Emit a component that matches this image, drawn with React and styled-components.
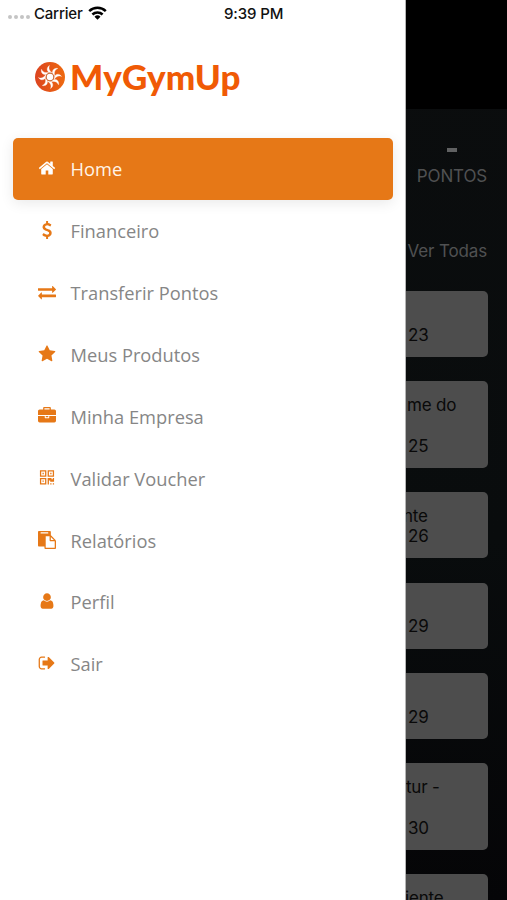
import React from "react";
import styled, { createGlobalStyle } from "styled-components";

const GlobalStyle = createGlobalStyle`
  * {
    box-sizing: border-box;
  }

  body {
    margin: 0;
    background: #000;
  }
`;

const Screen = styled.div`
  display: flex;
  width: 507px;
  height: 900px;
  overflow: hidden;
  font-family: Inter, "Liberation Sans", sans-serif;
`;

const Drawer = styled.aside`
  flex: none;
  width: 406px;
  background: #fff;
  border-right: 1px solid #b5b5b5;
`;

const StatusBar = styled.div`
  display: flex;
  align-items: center;
  height: 26px;
  padding-left: 8px;
  color: #111;
  font-size: 15px;
  font-weight: 500;
  white-space: nowrap;
`;

const Signal = styled.div`
  display: flex;
  gap: 2px;
  margin: 8px 4px 0 0;
`;

const Dot = styled.span`
  width: 4px;
  height: 4px;
  border-radius: 50%;
  background: #c4c4c4;
`;

const Carrier = styled.span`
  width: 49px;
  letter-spacing: -0.2px;
`;

const WifiIcon = styled.svg`
  width: 19px;
  height: 14px;
  margin-left: 5px;
`;

const Clock = styled.span`
  margin-left: 117px;
  letter-spacing: -0.1px;
`;

const Brand = styled.div`
  display: flex;
  align-items: center;
  height: 102px;
  padding-left: 35px;
`;

const BrandMark = styled.svg`
  width: 30px;
  height: 30px;
  margin-right: 5px;
`;

const BrandName = styled.span`
  margin-top: -3px;
  color: #f05a05;
  font-family: Lato, sans-serif;
  font-size: 35px;
  font-weight: 900;
  line-height: 40px;
  letter-spacing: 0.2px;
`;

const Menu = styled.nav`
  display: flex;
  flex-direction: column;
  padding: 10px 12px 0 13px;
`;

const MenuItem = styled.a`
  display: flex;
  align-items: center;
  height: 61.87px;
  padding-left: 25px;
  border-radius: 5px;
  color: ${({ $active }) => ($active ? "#fff4e8" : "#868686")};
  background: ${({ $active }) => ($active ? "#e67817" : "transparent")};
  box-shadow: ${({ $active }) =>
    $active ? "0 3px 14px rgba(0, 0, 0, 0.09)" : "none"};
  font-family: "Open Sans", sans-serif;
  font-size: 18.3px;

  svg {
    width: 18px;
    height: 18px;
    margin: 0 14.5px 1px 0;
    fill: ${({ $active }) => ($active ? "#fff" : "#e67817")};
  }
`;

const Backdrop = styled.main`
  flex: 1;
  min-width: 0;
  overflow: hidden;
  background: linear-gradient(#0b0d0e, #090c0d 60%, #050507);
`;

const Notch = styled.div`
  height: 109px;
  background: #000;
`;

const Summary = styled.section`
  display: flex;
  flex-direction: column;
  align-items: flex-end;
  height: 182px;
  padding: 39px 20px 0 0;
  color: #505152;
  font-size: 17px;
  line-height: 20px;
  letter-spacing: -0.15px;
  white-space: nowrap;
`;

const Points = styled.div`
  display: flex;
  flex-direction: column;
  align-items: center;
`;

const Dash = styled.span`
  width: 10px;
  height: 4px;
  margin-bottom: 14px;
  background: #606162;
`;

const SeeAll = styled.a`
  margin-top: 55px;
`;

const Cards = styled.section`
  display: flex;
  flex-direction: column;
  gap: 24.4px;
`;

const Card = styled.article`
  flex: none;
  width: 82px;
  height: ${({ $tall }) => ($tall ? "86.4px" : "66px")};
  padding-top: 13.4px;
  overflow: hidden;
  border-radius: 0 5px 5px 0;
  background: #4d4d4d;
  color: #090909;
  font-size: 17px;
  line-height: 20.4px;
  letter-spacing: -0.2px;
  white-space: nowrap;
`;

const Line = styled.div`
  height: 20.4px;
  margin-left: ${({ $left }) => $left}px;
`;

const items = [
  {
    label: "Home",
    d: "M1472 992v480q0 26-19 45t-45 19h-384v-384h-256v384h-384q-26 0-45-19t-19-45v-480q0-1 .5-3t.5-3l575-474 575 474q1 2 1 6zm223-69l-62 74q-8 9-21 11h-3q-13 0-21-7l-692-577-692 577q-12 8-24 7-13-2-21-11l-62-74q-8-10-7-23.5t11-21.5l719-599q32-26 76-26t76 26l244 204v-195q0-14 9-23t23-9h192q14 0 23 9t9 23v408l219 182q10 8 11 21.5t-7 23.5z",
  },
  {
    label: "Financeiro",
    d: "M1362 1185q0 153-99.5 263.5t-258.5 136.5v175q0 14-9 23t-23 9h-135q-13 0-22.5-9.5t-9.5-22.5v-175q-66-9-127.5-31t-101.5-44.5-74-48-46.5-37.5-17.5-18q-17-21-2-41l103-135q7-10 23-12 15-2 24 9l2 2q113 99 243 125 37 8 74 8 81 0 142.5-43t61.5-122q0-28-15-53t-33.5-42-58.5-37.5-66-32-80-32.5q-39-16-61.5-25t-61.5-26.5-62.5-31-56.5-35.5-53.5-42.5-43.5-49-35.5-58-21-66.5-8.5-78q0-138 98-242t255-134v-180q0-13 9.5-22.5t22.5-9.5h135q14 0 23 9t9 23v176q57 6 110.5 23t87 33.5 63.5 37.5 39 29 15 14q17 18 5 38l-81 146q-8 15-23 16-14 3-27-7-3-3-14.5-12t-39-26.5-58.5-32-74.5-26-85.5-11.5q-95 0-155 43t-60 111q0 26 8.5 48t29.5 41.5 39.5 33 56 31 60.5 27 70 27.5q53 20 81 31.5t76 35 75.5 42.5 62 50 53 63.5 31.5 76.5 13 94z",
  },
  {
    label: "Transferir Pontos",
    d: "M1792 1184v192q0 13-9.5 22.5t-22.5 9.5h-1376v192q0 13-9.5 22.5t-22.5 9.5q-12 0-24-10l-319-320q-9-9-9-22 0-14 9-23l320-320q9-9 23-9 13 0 22.5 9.5t9.5 22.5v192h1376q13 0 22.5 9.5t9.5 22.5zm0-544q0 14-9 23l-320 320q-9 9-23 9-13 0-22.5-9.5t-9.5-22.5v-192h-1376q-13 0-22.5-9.5t-9.5-22.5v-192q0-13 9.5-22.5t22.5-9.5h1376v-192q0-14 9-23t23-9q12 0 24 10l319 319q9 9 9 23z",
  },
  {
    label: "Meus Produtos",
    d: "M1728 647q0 22-26 48l-363 354 86 500q1 7 1 20 0 21-10.5 35.5t-30.5 14.5q-19 0-40-12l-449-236-449 236q-22 12-40 12-21 0-31.5-14.5t-10.5-35.5q0-6 2-20l86-500-364-354q-25-27-25-48 0-37 56-46l502-73 225-455q19-41 49-41t49 41l225 455 502 73q56 9 56 46z",
  },
  {
    label: "Minha Empresa",
    d: "M640 256h512v-128h-512v128zm1152 640v480q0 66-47 113t-113 47h-1472q-66 0-113-47t-47-113v-480h672v160q0 26 19 45t45 19h320q26 0 45-19t19-45v-160h672zm-768 0v128h-256v-128h256zm768-480v384h-1792v-384q0-66 47-113t113-47h352v-160q0-40 28-68t68-28h576q40 0 68 28t28 68v160h352q66 0 113 47t47 113z",
  },
  {
    label: "Validar Voucher",
    d: "M576 1152v128h-128v-128h128zm0-768v128h-128v-128h128zm768 0v128h-128v-128h128zm-1024 1023h384v-383h-384v383zm0-767h384v-384h-384v384zm768 0h384v-384h-384v384zm-256 256v640h-640v-640h640zm512 512v128h-128v-128h128zm256 0v128h-128v-128h128zm0-512v384h-384v-128h-128v384h-128v-640h384v128h128v-128h128zm-768-768v640h-640v-640h640zm768 0v640h-640v-640h640z",
  },
  {
    label: "Relatórios",
    d: "M768 1664h896v-640h-416q-40 0-68-28t-28-68v-416h-384v1152zm256-1440v-64q0-13-9.5-22.5t-22.5-9.5h-704q-13 0-22.5 9.5t-9.5 22.5v64q0 13 9.5 22.5t22.5 9.5h704q13 0 22.5-9.5t9.5-22.5zm256 672h299l-299-299v299zm512 128v672q0 40-28 68t-68 28h-960q-40 0-68-28t-28-68v-160h-544q-40 0-68-28t-28-68v-1344q0-40 28-68t68-28h1088q40 0 68 28t28 68v328q21 13 36 28l408 408q28 28 48 76t20 88z",
  },
  {
    label: "Perfil",
    d: "M1536 1399q0 109-62.5 187t-150.5 78h-854q-88 0-150.5-78t-62.5-187q0-85 8.5-160.5t31.5-152 58.5-131 94-89 134.5-34.5q131 128 313 128t313-128q76 0 134.5 34.5t94 89 58.5 131 31.5 152 8.5 160.5zm-256-887q0 159-112.5 271.5t-271.5 112.5-271.5-112.5-112.5-271.5 112.5-271.5 271.5-112.5 271.5 112.5 112.5 271.5z",
  },
  {
    label: "Sair",
    d: "M704 1440q0 4 1 20t.5 26.5-3 23.5-10 19.5-20.5 6.5h-320q-119 0-203.5-84.5t-84.5-203.5v-704q0-119 84.5-203.5t203.5-84.5h320q13 0 22.5 9.5t9.5 22.5q0 4 1 20t.5 26.5-3 23.5-10 19.5-20.5 6.5h-320q-66 0-113 47t-47 113v704q0 66 47 113t113 47h312l11.5 1 11.5 3 8 5.5 7 9 2 13.5zm928-544q0 26-19 45l-544 544q-19 19-45 19t-45-19-19-45v-288h-448q-26 0-45-19t-19-45v-384q0-26 19-45t45-19h448v-288q0-26 19-45t45-19 45 19l544 544q19 19 19 45z",
  },
];

// left is where the visible end of each line starts, next to the drawer
const cards = [
  { lines: [["", 0], ["23", 2]] },
  { tall: true, lines: [["me do", 1], ["", 0], ["25", 2]] },
  { lines: [["nte", -3], ["26", 2]] },
  { lines: [["", 0], ["29", 2]] },
  { lines: [["", 0], ["29", 2]] },
  { tall: true, lines: [["tur -", 0], ["", 0], ["30", 2]] },
  { tall: true, lines: [["iente", -1]] },
];

const blades = [0, 45, 90, 135, 180, 225, 270, 315];

const App = () => {
  return (
    <>
      <GlobalStyle />
      <Screen>
        <Drawer>
          <StatusBar>
            <Signal>
              <Dot />
              <Dot />
              <Dot />
              <Dot />
            </Signal>
            <Carrier>Carrier</Carrier>
            <WifiIcon viewBox="0 0 19 14">
              <g fill="none" stroke="#000" strokeWidth="2.5">
                <path d="M1.2 5.2a12 12 0 0 1 16.6 0" />
                <path d="M4.4 8.5a7.4 7.4 0 0 1 10.2 0" />
              </g>
              <path d="M9.5 13.8l-3-3a4.3 4.3 0 0 1 6 0z" />
            </WifiIcon>
            <Clock>9:39 PM</Clock>
          </StatusBar>

          <Brand>
            <BrandMark viewBox="0 0 30 30">
              <defs>
                <linearGradient id="mark" x1="0" x2="1">
                  <stop offset="0" stopColor="#dc4420" />
                  <stop offset="1" stopColor="#ee6a10" />
                </linearGradient>
              </defs>
              <circle cx="15" cy="15" r="15" fill="url(#mark)" />
              {blades.map((angle) => (
                <path
                  key={angle}
                  d="M16.5 11.5C12 10.5 10.5 6 14.5 3.4C13.2 6.6 14.5 9 17.5 10.8Z"
                  fill="#fff"
                  stroke="#fff"
                  strokeWidth="0.3"
                  strokeLinejoin="round"
                  transform={`rotate(${angle} 15 15)`}
                />
              ))}
              <circle
                cx="15"
                cy="15"
                r="3.8"
                fill="#fff"
                stroke="#c9703f"
                strokeWidth="1.2"
              />
            </BrandMark>
            <BrandName>MyGymUp</BrandName>
          </Brand>

          <Menu>
            {items.map(({ label, d }, index) => (
              <MenuItem key={label} $active={index === 0}>
                <svg viewBox="0 0 1792 1792">
                  <path d={d} />
                </svg>
                {label}
              </MenuItem>
            ))}
          </Menu>
        </Drawer>

        <Backdrop>
          <Notch />
          <Summary>
            <Points>
              <Dash />
              PONTOS
            </Points>
            <SeeAll>Ver Todas</SeeAll>
          </Summary>
          <Cards>
            {cards.map(({ tall, lines }, index) => (
              <Card key={index} $tall={tall}>
                {lines.map(([text, left], i) => (
                  <Line key={i} $left={left}>
                    {text}
                  </Line>
                ))}
              </Card>
            ))}
          </Cards>
        </Backdrop>
      </Screen>
    </>
  );
};

export default App;
